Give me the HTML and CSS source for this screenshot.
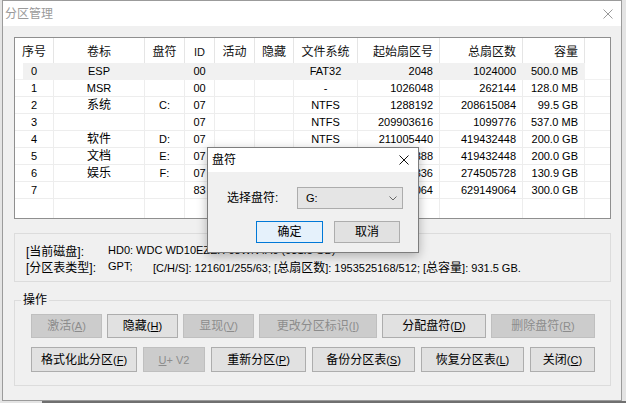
FILE: index.html
```html
<!DOCTYPE html>
<html lang="zh-CN">
<head>
<meta charset="utf-8">
<title>分区管理</title>
<link rel="stylesheet" href="styles.css">
</head>
<body>
<div class="window">
  <div class="titlebar">
    <span class="title">分区管理</span>
    <svg class="close" width="10" height="10" viewBox="0 0 10 10"><path d="M0.5 0.5 L9.5 9.5 M9.5 0.5 L0.5 9.5" stroke="#9a9a9a" stroke-width="1" fill="none"/></svg>
  </div>
  <div class="body">
    <div class="list">
      <div class="lv-row lv-head">
        <div>序号</div><div>卷标</div><div>盘符</div><div class="lat">ID</div><div>活动</div><div>隐藏</div><div>文件系统</div><div class="r">起始扇区号</div><div class="r">总扇区数</div><div class="r">容量</div><div></div>
      </div>
      <div class="lv-row lv-item sel">
        <div>0</div><div>ESP</div><div></div><div>00</div><div></div><div></div><div>FAT32</div><div class="r">2048</div><div class="r">1024000</div><div class="r">500.0 MB</div><div></div>
      </div>
      <div class="lv-row lv-item">
        <div>1</div><div>MSR</div><div></div><div>00</div><div></div><div></div><div>-</div><div class="r">1026048</div><div class="r">262144</div><div class="r">128.0 MB</div><div></div>
      </div>
      <div class="lv-row lv-item">
        <div>2</div><div class="z">系统</div><div>C:</div><div>07</div><div></div><div></div><div>NTFS</div><div class="r">1288192</div><div class="r">208615084</div><div class="r">99.5 GB</div><div></div>
      </div>
      <div class="lv-row lv-item">
        <div>3</div><div></div><div></div><div>07</div><div></div><div></div><div>NTFS</div><div class="r">209903616</div><div class="r">1099776</div><div class="r">537.0 MB</div><div></div>
      </div>
      <div class="lv-row lv-item">
        <div>4</div><div class="z">软件</div><div>D:</div><div>07</div><div></div><div></div><div>NTFS</div><div class="r">211005440</div><div class="r">419432448</div><div class="r">200.0 GB</div><div></div>
      </div>
      <div class="lv-row lv-item">
        <div>5</div><div class="z">文档</div><div>E:</div><div>07</div><div></div><div></div><div>NTFS</div><div class="r">630437888</div><div class="r">419432448</div><div class="r">200.0 GB</div><div></div>
      </div>
      <div class="lv-row lv-item">
        <div>6</div><div class="z">娱乐</div><div>F:</div><div>07</div><div></div><div></div><div>NTFS</div><div class="r">1049870336</div><div class="r">274505728</div><div class="r">130.9 GB</div><div></div>
      </div>
      <div class="lv-row lv-item">
        <div>7</div><div></div><div></div><div>83</div><div></div><div></div><div></div><div class="r">1324376064</div><div class="r">629149064</div><div class="r">300.0 GB</div><div></div>
      </div>
      <div class="lv-row lv-fill">
        <div></div><div></div><div></div><div></div><div></div><div></div><div></div><div></div><div></div><div></div><div></div>
      </div>
    </div>

    <div class="info">
      <div class="line"><span class="k">[当前磁盘]:</span><span>HD0: WDC WD10EZEX-08WN4A0 (931.5 GB)</span></div>
      <div class="line"><span class="k">[分区表类型]:</span><span class="gpt">GPT;</span><span>[C/H/S]: 121601/255/63; [<span class="z">总扇区数</span>]: 1953525168/512; [<span class="z">总容量</span>]: 931.5 GB.</span></div>
    </div>

    <fieldset class="ops">
      <legend>操作</legend>
      <div class="btns r1">
        <button class="btn dis">激活<span class="m">(<u>A</u>)</span></button>
        <button class="btn">隐藏<span class="m">(<u>H</u>)</span></button>
        <button class="btn dis">显现<span class="m">(<u>V</u>)</span></button>
        <button class="btn dis">更改分区标识<span class="m">(<u>I</u>)</span></button>
        <button class="btn">分配盘符<span class="m">(<u>D</u>)</span></button>
        <button class="btn dis">删除盘符<span class="m">(<u>R</u>)</span></button>
      </div>
      <div class="btns r2">
        <button class="btn">格式化此分区<span class="m">(<u>F</u>)</span></button>
        <button class="btn dis"><span class="m"><u>U</u>+ V2</span></button>
        <button class="btn">重新分区<span class="m">(<u>P</u>)</span></button>
        <button class="btn">备份分区表<span class="m">(<u>S</u>)</span></button>
        <button class="btn">恢复分区表<span class="m">(<u>L</u>)</span></button>
        <button class="btn">关闭<span class="m">(<u>C</u>)</span></button>
      </div>
    </fieldset>
  </div>

  <div class="dialog">
    <div class="dlg-title">
      <span>盘符</span>
      <svg width="10" height="10" viewBox="0 0 10 10"><path d="M0.5 0.5 L9.5 9.5 M9.5 0.5 L0.5 9.5" stroke="#111" stroke-width="1" fill="none"/></svg>
    </div>
    <div class="dlg-body">
      <div class="dlg-row">
        <span class="dlg-label">选择盘符:</span>
        <div class="select"><span class="sel-val">G:</span><svg width="8" height="5" viewBox="0 0 8 5"><path d="M0.5 0.5 L4 4 L7.5 0.5" stroke="#666" stroke-width="1" fill="none"/></svg></div>
      </div>
      <div class="dlg-btns">
        <button class="dbtn def">确定</button>
        <button class="dbtn">取消</button>
      </div>
    </div>
  </div>
</div>
<div class="behind"></div>
</body>
</html>
```

FILE: styles.css
```css
html, body {
  margin: 0;
  padding: 0;
}
body {
  width: 626px;
  height: 403px;
  overflow: hidden;
  background: #e4e4e4;
  font-family: "Liberation Sans", "Noto Sans CJK SC", sans-serif;
  font-size: 11px;
  color: #000;
}
.window {
  position: relative;
  margin-left: 2px;
  width: 620px;
  height: 401px;
  box-sizing: border-box;
  border: 1px solid #9b9b9b;
  background: #f0f0f0;
  display: flex;
  flex-direction: column;
}
.titlebar {
  flex: none;
  height: 25px;
  background: #fff;
  display: flex;
  align-items: center;
  justify-content: space-between;
  padding: 0 8px 0 2px;
}
.title {
  font-size: 12px;
  line-height: 16px;
  color: #9a9a9a;
}
.body {
  flex: 1;
  padding: 11px 10px 0 11px;
}
.list {
  height: 182px;
  box-sizing: border-box;
  border: 1px solid #8f8f8f;
  background: #fff;
  display: flex;
  flex-direction: column;
}
.lv-row {
  display: grid;
  grid-template-columns: 39px 91px 40px 30px 40px 39px 64px 82px 83px 62px 1fr;
}
.lv-row > div {
  box-sizing: border-box;
  border-right: 1px solid #ededed;
  display: flex;
  align-items: center;
  justify-content: center;
  white-space: nowrap;
  overflow: hidden;
  line-height: 16px;
}
.lv-row > div:last-child {
  border-right: none;
}
.lv-row > div.r {
  justify-content: flex-end;
  padding-right: 6px;
}
.lv-head {
  flex: none;
  height: 25px;
  font-size: 12px;
  color: #111;
}
.lv-head > div {
  border-right-color: #e5e5e5;
  padding-top: 2px;
}
.lv-head > div.lat {
  font-size: 11px;
}
.lv-item {
  flex: none;
  height: 17px;
  box-sizing: border-box;
  border-bottom: 1px solid #ededed;
}
.lv-item > div.z {
  font-size: 12px;
}
.sel {
  background: linear-gradient(to right, transparent 8px, #f1f1f1 8px, #f1f1f1 569px, transparent 569px);
  border-bottom-color: #f1f1f1;
}
.sel > div {
  border-right-color: #f1f1f1;
}
.lv-fill {
  flex: 1;
}
.info {
  margin-top: 14px;
  height: 49px;
  box-sizing: border-box;
  border: 1px solid #dcdcdc;
  padding: 8px 0 0 11px;
}
.line {
  display: flex;
  align-items: center;
  height: 16px;
  white-space: nowrap;
}
.k {
  width: 82px;
  flex: none;
  font-size: 12px;
}
.z {
  font-size: 12px;
}
.gpt {
  width: 45px;
  flex: none;
}
.ops {
  margin: 10px 0 0;
  padding: 6px 15px 13px 16px;
  border: 1px solid #dcdcdc;
  min-width: 0;
}
.ops legend {
  padding: 0 2px;
  margin-left: -10px;
  font-size: 12px;
  line-height: 16px;
}
.btns {
  display: grid;
}
.r1 {
  height: 24px;
  column-gap: 5px;
  grid-template-columns: 71px 71px 71px 118px 104px 104px;
}
.r2 {
  margin-top: 9px;
  height: 25px;
  column-gap: 6px;
  grid-template-columns: 106px 62px 95px 103px 103px 65px;
}
.btn {
  box-sizing: border-box;
  margin: 0;
  padding: 0;
  border: 1px solid #adadad;
  background: #e1e1e1;
  font-family: inherit;
  font-size: 12px;
  line-height: 16px;
  color: #000;
  display: flex;
  align-items: center;
  justify-content: center;
  white-space: nowrap;
}
.btn.dis {
  background: #cccccc;
  border-color: #bfbfbf;
  color: #8c8c8c;
}
.m {
  font-size: 11px;
}
.m u {
  text-underline-offset: 1px;
}
.dialog {
  position: absolute;
  left: 204px;
  top: 146px;
  width: 212px;
  height: 106px;
  box-sizing: border-box;
  border: 1px solid #7d7d7d;
  background: #f0f0f0;
  box-shadow: 0 3px 10px rgba(0, 0, 0, 0.28);
  display: flex;
  flex-direction: column;
}
.dlg-title {
  flex: none;
  height: 24px;
  background: #fff;
  display: flex;
  align-items: center;
  justify-content: space-between;
  padding: 0 9px 0 4px;
  font-size: 12px;
  line-height: 16px;
}
.dlg-body {
  padding: 15px 0 0 19px;
}
.dlg-row {
  display: flex;
  align-items: center;
  height: 22px;
}
.dlg-label {
  width: 70px;
  font-size: 12px;
  line-height: 16px;
}
.select {
  width: 106px;
  height: 22px;
  box-sizing: border-box;
  border: 1px solid #acacac;
  background: #e5e5e5;
  display: flex;
  align-items: center;
  justify-content: space-between;
  padding: 0 5px 0 8px;
}
.sel-val {
  font-size: 11px;
}
.dlg-btns {
  display: flex;
  margin-top: 12px;
  margin-left: 29px;
  gap: 11px;
}
.dbtn {
  box-sizing: border-box;
  margin: 0;
  padding: 0;
  width: 66px;
  height: 22px;
  border: 1px solid #adadad;
  background: #e1e1e1;
  font-family: inherit;
  font-size: 12px;
  line-height: 16px;
  color: #000;
}
.dbtn.def {
  width: 67px;
  border-color: #0078d7;
  background: #e5f1fb;
}
.behind {
  margin-left: 42px;
  height: 2px;
  background: #707070;
}
```
